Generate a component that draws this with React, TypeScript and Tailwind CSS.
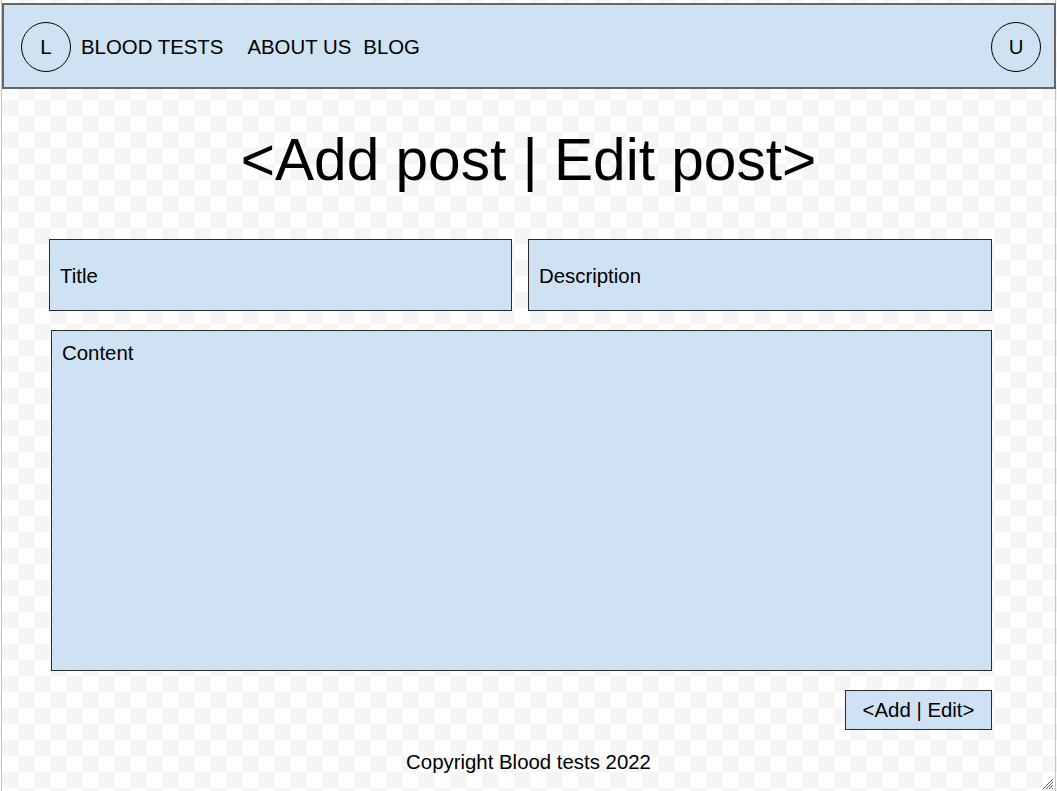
import React from "react";

export default function App() {
  return (
    <div
      className="relative w-[1057px] h-[791px] overflow-hidden text-black bg-[repeating-conic-gradient(#f5f5f5_0%_25%,#ffffff_0%_50%)] bg-[length:32px_32px] bg-[position:2px_20px]"
      style={{ fontFamily: '"Liberation Sans", Arial, sans-serif' }}
    >
      <div className="ml-[1px] w-[1055px] h-full border-x border-[#c4c4c4] pt-[3px] flex flex-col">
        {/* Header */}
        <header className="w-[1054px] h-[86px] shrink-0 bg-[#cfe2f3] border-2 border-[#666666] flex items-center pl-[17px] pr-[13px] pt-[2px]">
          <div className="w-[50px] h-[50px] rounded-full border border-black flex items-center justify-center text-[20.4px]">
            L
          </div>
          <nav className="ml-[10px] flex items-center text-[20.4px]">
            <span>BLOOD TESTS</span>
            <span className="ml-[24px]">ABOUT US</span>
            <span className="ml-[12px]">BLOG</span>
          </nav>
          <div className="ml-auto w-[50px] h-[50px] rounded-full border border-black flex items-center justify-center text-[20.4px]">
            U
          </div>
        </header>

        {/* Heading */}
        <h1 className="mt-[41px] h-[59px] text-center text-[58.6px] leading-[59px]">
          &lt;Add post | Edit post&gt;
        </h1>

        {/* Form */}
        <div className="mt-[50px] ml-[47px] flex gap-[16px]">
          <div className="w-[463px] h-[72px] bg-[#cfe2f3] border border-[#2b2b2b] flex items-center pl-[10px] pt-[2px] text-[20.4px]">
            Title
          </div>
          <div className="w-[464px] h-[72px] bg-[#cfe2f3] border border-[#2b2b2b] flex items-center pl-[10px] pt-[2px] text-[20.4px]">
            Description
          </div>
        </div>

        <div className="mt-[19px] ml-[49px] w-[941px] h-[341px] bg-[#cfe2f3] border border-[#2b2b2b] pl-[10px] pt-[10px] text-[20.4px] leading-[24px]">
          Content
        </div>

        <div className="mt-[19px] ml-[843px] w-[147px] h-[40px] bg-[#cfe2f3] border border-[#2b2b2b] flex items-center justify-center text-[20.4px]">
          &lt;Add | Edit&gt;
        </div>

        <footer className="mt-[20px] text-center text-[20.4px] leading-[24px]">
          Copyright Blood tests 2022
        </footer>
      </div>

      {/* resize grip */}
      <svg
        className="absolute right-[3px] bottom-[1px]"
        width="12"
        height="12"
        viewBox="0 0 12 12"
      >
        <line x1="11" y1="1" x2="1" y2="11" stroke="#555" strokeWidth="1" />
        <line x1="11" y1="4" x2="4" y2="11" stroke="#555" strokeWidth="1" />
        <line x1="11" y1="7" x2="7" y2="11" stroke="#555" strokeWidth="1" />
        <line x1="11" y1="10" x2="10" y2="11" stroke="#555" strokeWidth="1" />
      </svg>
    </div>
  );
}
